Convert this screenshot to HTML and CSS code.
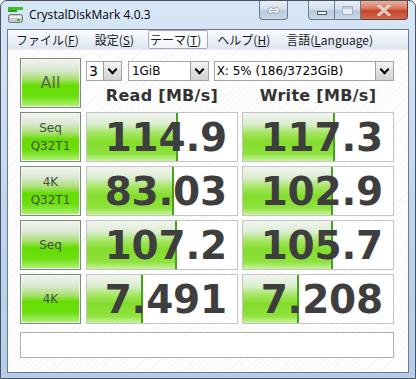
FILE: index.html
```html
<!DOCTYPE html>
<html>
<head>
    <title>CrystalDiskMark 4.0.3</title>
    <link rel="stylesheet" href="styles.css">
</head>
<body>
    <div class="window">
        <header class="titlebar">
            <svg class="app-icon" width="15" height="16" viewBox="0 0 15 16">
                <rect x="0" y="0" width="15" height="3" fill="#3fbf2a"/>
                <rect x="0" y="3" width="9" height="2" fill="#2f9f20"/>
                <rect x="0.5" y="7.5" width="14" height="8" rx="2" fill="#c8ccd0" stroke="#70767c"/>
                <rect x="2" y="9" width="11" height="2" fill="#eef0f2"/>
                <rect x="9" y="12" width="3" height="2" fill="#30c020"/>
            </svg>
            <span class="title">CrystalDiskMark 4.0.3</span>
            <div class="cap-btn cap-zoom">⇔</div>
            <div class="cap-group">
                <div class="cap-btn cap-min"><span class="min-bar"></span></div>
                <div class="cap-btn cap-max"><span class="max-box"></span></div>
                <div class="cap-btn cap-close">
                    <svg width="14" height="11" viewBox="0 0 14 11">
                        <path d="M2 1 L12 10 M12 1 L2 10" stroke="#fff" stroke-width="3" stroke-linecap="square"/>
                        <path d="M2 1 L12 10 M12 1 L2 10" stroke="#8a2a1a" stroke-width="3" stroke-linecap="square" opacity="0.25" transform="translate(0 0.5)"/>
                    </svg>
                </div>
            </div>
        </header>

        <div class="client">
            <nav class="menubar">
                <span class="menu-item">ファイル(<u>F</u>)</span>
                <span class="menu-item">設定(<u>S</u>)</span>
                <span class="menu-item active">テーマ(<u>T</u>)</span>
                <span class="menu-item">ヘルプ(<u>H</u>)</span>
                <span class="menu-item">言語(<u>L</u>anguage)</span>
            </nav>

            <main class="bench">
                <div class="label-btn all">All</div>
                <div class="controls">
                    <div class="selects">
                        <div class="select sel-count"><span>3</span><i class="drop"></i></div>
                        <div class="select sel-size"><span>1GiB</span><i class="drop"></i></div>
                        <div class="select sel-drive"><span>X: 5% (186/3723GiB)</span><i class="drop"></i></div>
                    </div>
                    <div class="heads">
                        <div class="head">Read [MB/s]</div>
                        <div class="head">Write [MB/s]</div>
                    </div>
                </div>

                <div class="label-btn two-line">Seq<br>Q32T1</div>
                <div class="value"><div class="bar" style="width: 91px"></div><span>114.9</span></div>
                <div class="value"><div class="bar" style="width: 92px"></div><span>117.3</span></div>

                <div class="label-btn two-line">4K<br>Q32T1</div>
                <div class="value"><div class="bar" style="width: 87px"></div><span>83.03</span></div>
                <div class="value"><div class="bar" style="width: 90px"></div><span>102.9</span></div>

                <div class="label-btn">Seq</div>
                <div class="value"><div class="bar" style="width: 90px"></div><span>107.2</span></div>
                <div class="value"><div class="bar" style="width: 90px"></div><span>105.7</span></div>

                <div class="label-btn">4K</div>
                <div class="value"><div class="bar" style="width: 56px"></div><span>7.491</span></div>
                <div class="value"><div class="bar" style="width: 56px"></div><span>7.208</span></div>

                <div class="comment"></div>
            </main>
        </div>
    </div>
</body>
</html>
```

FILE: styles.css
```css
* {
    box-sizing: border-box;
}

body {
    margin: 0;
    width: 416px;
    height: 379px;
    overflow: hidden;
    font-family: "DejaVu Sans", "Noto Sans CJK JP", sans-serif;
}

.window {
    width: 416px;
    height: 379px;
    border: 1px solid #4a5260;
    border-radius: 7px 7px 0 0;
    background: linear-gradient(180deg, #d8e7f6 0%, #c6daf0 40%, #b3cdea 100%);
    padding: 0 6px 5px 6px;
    display: flex;
    flex-direction: column;
}

/* title bar */
.titlebar {
    height: 28px;
    display: flex;
    align-items: flex-start;
    margin: 0 -6px;
    padding: 0 7px 0 7px;
}

.app-icon {
    margin-top: 6px;
    flex: none;
}

.title {
    margin-left: 6px;
    margin-top: 5px;
    font-family: "Open Sans", "Liberation Sans", sans-serif;
    font-size: 12px;
    color: #000;
    letter-spacing: 0.05px;
}

.cap-btn {
    height: 19px;
    border: 1px solid #6d7a8c;
    border-top: none;
    display: flex;
    align-items: center;
    justify-content: center;
    background: linear-gradient(180deg, #e6eef8 0%, #d4e0ee 45%, #b8c9dd 55%, #c9d9ea 100%);
}

.cap-zoom {
    margin-left: auto;
    width: 29px;
    border-radius: 0 0 4px 4px;
    font-size: 15px;
    color: #fff;
    text-shadow: 0 0 1px #445, 0 0 1px #445;
    font-weight: bold;
}

.cap-group {
    display: flex;
    margin-left: 20px;
}

.cap-min {
    width: 27px;
    border-radius: 0 0 0 4px;
}

.min-bar {
    width: 10px;
    height: 4px;
    margin-top: 5px;
    background: #fff;
    border: 1px solid #4c5868;
}

.cap-max {
    width: 26px;
    border-left: none;
}

.max-box {
    width: 11px;
    height: 9px;
    border: 1px solid #a8b4c4;
    background: #e4ebf4;
    box-shadow: inset 0 2px 0 #c0cad8;
}

.cap-close {
    width: 47px;
    border-left: none;
    border-color: #6a3a34;
    border-radius: 0 0 4px 0;
    background: linear-gradient(180deg, #eab0a0 0%, #dc7c62 40%, #c4442a 55%, #d06a4e 100%);
}

/* client */
.client {
    flex: 1;
    border: 1px solid #6a7a90;
    display: flex;
    flex-direction: column;
    background: repeating-linear-gradient(-45deg, #ffffff 0 3px, #f5f5f5 3px 4px);
}

.menubar {
    height: 20px;
    display: flex;
    align-items: center;
    padding-left: 6px;
    background: linear-gradient(180deg, #fbfcfe 0%, #eef2f8 45%, #dde5f1 100%);
    border-bottom: 1px solid #e8ecf2;
    font-family: "Noto Sans CJK JP", sans-serif;
    font-size: 12px;
    color: #1a1a1a;
}

.menu-item {
    height: 19px;
    line-height: 17px;
    padding: 0 6px 0 1px;
    margin-right: 7px;
    border: 1px solid transparent;
}

.menu-item u {
    text-decoration-thickness: 1px;
    text-underline-offset: 1px;
}

.menu-item.active {
    border-color: #a6adb8;
    background: linear-gradient(180deg, #ffffff 0%, #f2f4f8 100%);
    border-radius: 2px;
}

/* benchmark grid */
.bench {
    display: grid;
    grid-template-columns: 62px 152px 152px;
    grid-template-rows: 50px 50px 50px 50px 50px 30px;
    column-gap: 4px;
    row-gap: 4px;
    padding: 8px 0 0 12px;
}

.label-btn {
    border: 1px solid #7d8c7a;
    box-shadow: inset 0 0 0 1px #f0f6ec;
    background: linear-gradient(180deg, #f2f4f0 0%, #dce8d4 22%, #a8e070 42%, #66dd00 55%, #6ce010 78%, #b4f07c 100%);
    display: flex;
    align-items: center;
    justify-content: center;
    text-align: center;
    font-size: 12px;
    line-height: 18px;
    color: #44513a;
    margin-right: 1px;
}

.label-btn.all {
    font-size: 16px;
    color: #566650;
}

.controls {
    grid-column: 2 / 4;
    display: flex;
    flex-direction: column;
}

.selects {
    display: flex;
    margin-top: 3px;
    height: 20px;
}

.select {
    height: 20px;
    border: 1px solid #a4a4a4;
    background: #fff;
    display: flex;
    align-items: center;
    justify-content: space-between;
    font-family: "DejaVu Sans", sans-serif;
    font-size: 12px;
    color: #000;
    padding-left: 2px;
}

.sel-count {
    width: 36px;
    font-size: 14px;
}

.sel-size {
    width: 81px;
    margin-left: 6px;
    padding-left: 3px;
}

.sel-drive {
    width: 181px;
    margin-left: 5px;
    padding-left: 2px;
}

.drop {
    width: 18px;
    height: 18px;
    border-left: 1px solid #9a9a9a;
    background: linear-gradient(180deg, #f4f4f4 0%, #e2e2e2 50%, #d2d2d2 100%);
    position: relative;
}

.drop::after {
    content: "";
    position: absolute;
    left: 5px;
    top: 4px;
    width: 5px;
    height: 5px;
    border-right: 2px solid #000;
    border-bottom: 2px solid #000;
    transform: rotate(45deg);
}

.heads {
    display: flex;
    gap: 4px;
    margin-top: 5px;
}

.head {
    width: 152px;
    text-align: center;
    font-weight: bold;
    font-size: 16px;
    color: #333;
    letter-spacing: 0.3px;
}

.value {
    position: relative;
    border: 1px solid #c4c4c4;
    background: #fff;
    overflow: hidden;
    display: flex;
    align-items: center;
    justify-content: flex-end;
    padding-right: 10px;
}

.bar {
    position: absolute;
    left: 0;
    top: 0;
    bottom: 0;
    border-right: 2px solid #48a020;
    background: linear-gradient(180deg, #f2f4f0 0%, #dceed2 22%, #a4e660 42%, #84dc2c 60%, #8ee23c 85%, #c8f4a0 100%);
}

.value span {
    position: relative;
    font-weight: bold;
    font-size: 39px;
    color: #3e3e3e;
    letter-spacing: -0.2px;
}

.comment {
    grid-column: 1 / 4;
    margin-top: 4px;
    border: 1px solid #b0b0b0;
    background: #fff;
    width: 374px;
}
```
